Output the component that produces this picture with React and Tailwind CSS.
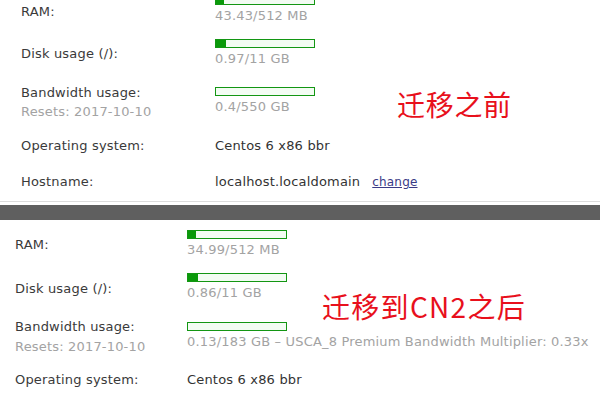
function Bar({ fill, className = "" }) {
  return (
    <div className={"h-[9px] w-[100px] border border-[#139613] bg-[#f3fcf3] " + className}>
      <div className="h-full bg-[#0a990a]" style={{ width: fill }} />
    </div>
  );
}

function UsageValue({ fill, text }) {
  return (
    <div>
      <Bar fill={fill} />
      <div className="mt-[3px] leading-[16px] text-[#a3a3a3]">{text}</div>
    </div>
  );
}

function App() {
  return (
    <div
      className="relative h-[400px] w-[600px] overflow-hidden bg-white text-[13px] tracking-[0.18px] text-[#3a3a3a]"
      style={{ fontFamily: '"DejaVu Sans", Verdana, sans-serif' }}
    >
      {/* before */}
      <div className="relative flow-root h-[201px] pl-[21px]">
        <div className="mt-[-4px] flex items-start">
          <div className="mt-[8px] w-[194px] leading-[16px]">RAM:</div>
          <UsageValue fill="8px" text="43.43/512 MB" />
        </div>
        <div className="mt-[15px] flex items-start">
          <div className="mt-[7px] w-[194px] leading-[16px]">Disk usage (/):</div>
          <UsageValue fill="10px" text="0.97/11 GB" />
        </div>
        <div className="mt-[20px] flex items-start">
          <div className="mt-[-4px] w-[194px] leading-[19px]">
            <div>Bandwidth usage:</div>
            <div className="text-[#a3a3a3]">Resets: 2017-10-10</div>
          </div>
          <UsageValue fill="0px" text="0.4/550 GB" />
        </div>
        <div className="mt-[17px] flex leading-[16px]">
          <div className="w-[194px]">Operating system:</div>
          <div className="text-[#333]">Centos 6 x86 bbr</div>
        </div>
        <div className="mt-[20px] flex leading-[16px]">
          <div className="w-[194px]">Hostname:</div>
          <div className="text-[#333]">localhost.localdomain</div>
          <a className="ml-[12px] text-[12px] text-[#3b3b86] underline">change</a>
        </div>
        <div
          className="absolute left-[397px] top-[86px] text-[28px] leading-[36px] tracking-[0.7px] text-[#e8101c]"
          style={{ fontFamily: '"Noto Sans CJK SC", sans-serif' }}
        >
          迁移之前
        </div>
      </div>

      <div className="h-px bg-[#dcdcdc]" />
      <div className="mt-[3px] h-[15px] bg-[#5f5f5f]" />

      {/* after */}
      <div className="relative pl-[15px] pt-[10px]">
        <div className="flex items-start">
          <div className="mt-[7px] w-[172px] leading-[16px]">RAM:</div>
          <UsageValue fill="8px" text="34.99/512 MB" />
        </div>
        <div className="mt-[15px] flex items-start">
          <div className="mt-[8px] w-[172px] leading-[16px]">Disk usage (/):</div>
          <UsageValue fill="10px" text="0.86/11 GB" />
        </div>
        <div className="mt-[21px] flex items-start">
          <div className="mt-[-5px] w-[172px] leading-[20px]">
            <div>Bandwidth usage:</div>
            <div className="text-[#a3a3a3]">Resets: 2017-10-10</div>
          </div>
          <UsageValue fill="0px" text="0.13/183 GB – USCA_8 Premium Bandwidth Multiplier: 0.33x" />
        </div>
        <div className="mt-[15px] flex leading-[16px]">
          <div className="w-[172px]">Operating system:</div>
          <div className="text-[#333]">Centos 6 x86 bbr</div>
        </div>
        <div
          className="absolute left-[322px] top-[68px] text-[28px] leading-[36px] tracking-[1.3px] text-[#e8101c]"
          style={{ fontFamily: '"Noto Sans CJK SC", sans-serif' }}
        >
          迁移到CN2之后
        </div>
      </div>
    </div>
  );
}

export default App;
